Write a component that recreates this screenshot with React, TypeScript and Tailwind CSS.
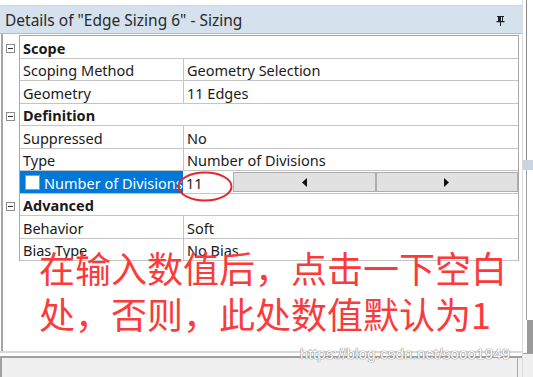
import React from 'react';

type Row =
  | { kind: 'group'; label: string; h: number }
  | { kind: 'prop'; label: string; value: string; h: number }
  | { kind: 'edit'; label: string; value: string; h: number };

const ROWS: Row[] = [
  { kind: 'group', label: 'Scope', h: 23 },
  { kind: 'prop', label: 'Scoping Method', value: 'Geometry Selection', h: 22 },
  { kind: 'prop', label: 'Geometry', value: '11 Edges', h: 23 },
  { kind: 'group', label: 'Definition', h: 22 },
  { kind: 'prop', label: 'Suppressed', value: 'No', h: 23 },
  { kind: 'prop', label: 'Type', value: 'Number of Divisions', h: 22 },
  { kind: 'edit', label: 'Number of Divisions', value: '11', h: 23 },
  { kind: 'group', label: 'Advanced', h: 22 },
  { kind: 'prop', label: 'Behavior', value: 'Soft', h: 23 },
  { kind: 'prop', label: 'Bias Type', value: 'No Bias', h: 22 },
];

function MinusBox() {
  return (
    <div className="flex h-[9px] w-[9px] items-center justify-center border border-[#8c8c8c] bg-white">
      <div className="h-px w-[5px] bg-[#333]" />
    </div>
  );
}

function PinIcon() {
  return (
    <svg width="9" height="11" viewBox="0 0 9 11" aria-hidden>
      <path d="M1 1h7v1H7v4h1.5v1.2H5V11H4V7.2H.5V6H2V2H1z" fill="#1f1f1f" />
      <path d="M5 2h1v4H5z" fill="#d5e1ed" />
    </svg>
  );
}

function SpinButton({ dir }: { dir: 'left' | 'right' }) {
  return (
    <div className="flex flex-1 items-center justify-center border border-[#adadad] bg-[#e1e1e1]">
      <svg width="5" height="9" viewBox="0 0 5 9" aria-hidden>
        {dir === 'left' ? <path d="M5 0v9L0 4.5z" fill="#111" /> : <path d="M0 0v9l5-4.5z" fill="#111" />}
      </svg>
    </div>
  );
}

export default function App() {
  return (
    <div
      className="relative flex h-[377px] w-[533px] overflow-hidden bg-white text-[#1a1a1a]"
      style={{ fontFamily: '"Noto Sans", "Noto Sans CJK SC", sans-serif' }}
    >
      {/* details panel */}
      <div className="flex w-[522px] flex-col">
        <div className="h-[6px] border-b border-[#d6d6d6] bg-white" />
        <div className="flex h-[28px] items-center justify-between border-b border-[#b4bcc6] bg-[#d5e1ed] pl-[5px] pr-[17px] pt-[2px]">
          <span className="text-[15.5px] leading-none text-[#2a2a2a]">Details of "Edge Sizing 6" - Sizing</span>
          <PinIcon />
        </div>

        <div className="ml-px flex h-[317px] border-l-2 border-[#a5a5a5] bg-white pt-px">
          <div className="flex w-[16px] flex-col pt-px">
            {ROWS.map((r, i) => (
              <div key={i} style={{ height: r.h }} className="flex items-center pl-[3px] pt-[2px]">
                {r.kind === 'group' ? <MinusBox /> : null}
              </div>
            ))}
          </div>

          <div className="flex h-[226px] w-[500px] flex-col border-x border-t border-[#a8a8a8] text-[14.5px] leading-none">
            {ROWS.map((r, i) => {
              if (r.kind === 'group') {
                return (
                  <div
                    key={i}
                    style={{ height: r.h }}
                    className="flex items-center border-b border-[#c4c4c4] pl-[3px] pt-[2px] font-bold"
                  >
                    {r.label}
                  </div>
                );
              }
              if (r.kind === 'edit') {
                return (
                  <div key={i} style={{ height: r.h }} className="flex border-b border-[#c4c4c4]">
                    <div className="flex w-[163px] items-center gap-[4px] overflow-hidden bg-[#0078d7] pl-[5px] text-white">
                      <div className="h-[15px] w-[15px] shrink-0 border border-[#9a9a9a] bg-white" />
                      <span className="whitespace-nowrap pt-[2px]">{r.label}</span>
                    </div>
                    <div className="flex flex-1 items-stretch py-px">
                      <div className="flex w-[50px] items-center pl-[3px] pt-[2px]">{r.value}</div>
                      <SpinButton dir="left" />
                      <SpinButton dir="right" />
                    </div>
                  </div>
                );
              }
              return (
                <div key={i} style={{ height: r.h }} className="flex border-b border-[#c4c4c4]">
                  <div className="flex w-[164px] items-center border-r border-[#c4c4c4] pl-[3px] pt-[2px]">{r.label}</div>
                  <div className="flex flex-1 items-center pl-[3px] pt-[2px]">{r.value}</div>
                </div>
              );
            })}
          </div>
        </div>

        <div className="h-[5px] border-t-2 border-[#d8d8d8] bg-white" />
        <div className="flex flex-1 border-t-2 border-l-2 border-[#a0a0a0] bg-[#f0f0f0]">
          <div className="w-[516px] border-r border-[#a8a8a8]" />
        </div>
      </div>

      {/* neighbouring panel edge */}
      <div className="flex w-[11px] flex-col border-l border-[#dadada]">
        <div className="ml-[3px] h-[160px] border-l border-[#8a8a8a]" />
        <div className="h-[10px] bg-[#c9d4e2]" />
        <div className="ml-[3px] h-[150px] border-l border-[#a0a0a0] bg-white" />
        <div className="ml-[4px] h-[33px] bg-[#9a9a9a]" />
        <div className="flex-1 border-t border-[#a0a0a0] bg-[#f0f0f0]" />
      </div>

      {/* red ellipse annotation */}
      <svg className="pointer-events-none absolute left-[176px] top-[170px]" width="58" height="34" viewBox="0 0 58 34">
        <ellipse cx="29" cy="16.5" rx="26.5" ry="14" fill="none" stroke="#e8262b" strokeWidth="2" />
      </svg>

      {/* red caption */}
      <div
        className="pointer-events-none absolute left-[39px] top-[244px] text-[36px] leading-[46px] text-[#fb3b3b]"
        style={{ fontFamily: '"Noto Sans CJK SC", sans-serif' }}
      >
        <div className="whitespace-nowrap">在输入数值后，点击一下空白</div>
        <div className="whitespace-nowrap">处，否则，此处数值默认为1</div>
      </div>

      {/* watermark */}
      <div
        className="pointer-events-none absolute left-[300px] top-[343px] text-[15px] tracking-[0.2px] text-white"
        style={{
          fontFamily: '"Liberation Sans", sans-serif',
          textShadow: '0 0 1px #8a8a8a, 0 0 1px #8a8a8a, 0 0 1px #8a8a8a',
        }}
      >
        https://blog.csdn.net/sooo1949
      </div>
    </div>
  );
}
